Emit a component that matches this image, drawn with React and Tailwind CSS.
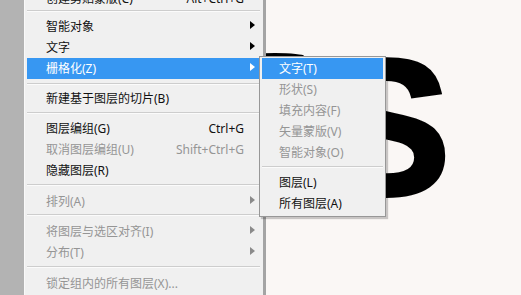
import React from 'react';

function Arrow({ color }) {
  return (
    <svg width="5" height="8" viewBox="0 0 5 8" className="-mt-[4px]">
      <path d="M0 0 L5 4 L0 8 Z" fill={color} />
    </svg>
  );
}

function Item({ label, shortcut, sub, disabled, active, h }) {
  const tone = active ? 'bg-[#3797f2] text-white' : disabled ? 'text-[#959595]' : 'text-[#111]';
  const arrow = active ? '#ffffff' : disabled ? '#8a8a8a' : '#000000';
  return (
    <div className={`flex items-center pl-[19px] ${h} ${tone}`}>
      <span className="flex-1 whitespace-nowrap">{label}</span>
      {shortcut && <span className="whitespace-nowrap">{shortcut}</span>}
      <span className="flex w-[16px] items-center pl-[6px]">{sub && <Arrow color={arrow} />}</span>
    </div>
  );
}

function SubItem({ label, disabled, active }) {
  const tone = active ? 'bg-[#3797f2] text-white' : disabled ? 'text-[#959595]' : 'text-[#111]';
  return (
    <div className={`flex h-[21px] items-center pl-[17px] whitespace-nowrap ${tone}`}>{label}</div>
  );
}

function Line() {
  return <div className="h-px bg-[#cdcdcd] shadow-[0_1px_0_#fbfbfb]" />;
}

export default function App() {
  return (
    <div className="relative flex h-[295px] w-[521px] overflow-hidden bg-[#faf7f5] font-['Noto_Sans','Noto_Sans_CJK_SC',sans-serif] text-[12px]">
      <div className="w-[24px] shrink-0 bg-[#b3b3b3]" />

      <div className="relative z-10 flex w-[242px] shrink-0 flex-col border-l border-r-[3px] border-l-[#f9f9f9] border-r-[#a4a4a4] bg-[#f0f0f0] pl-[2px] pr-[3px]">
        <div className="-mt-[12px]">
          <Item label="创建剪贴蒙版(C)" shortcut="Alt+Ctrl+G" h="h-[21px]" />
        </div>
        <div className="h-[8px] pt-[1px]"><Line /></div>
        <Item label="智能对象" sub h="h-[20px]" />
        <Item label="文字" sub h="h-[21px]" />
        <Item label="栅格化(Z)" sub active h="h-[21px]" />
        <div className="h-[9px] pt-[4px]"><Line /></div>
        <Item label="新建基于图层的切片(B)" h="h-[21px]" />
        <div className="h-[9px] pt-[3px]"><Line /></div>
        <Item label="图层编组(G)" shortcut="Ctrl+G" h="h-[21px]" />
        <Item label="取消图层编组(U)" shortcut="Shift+Ctrl+G" disabled h="h-[21px]" />
        <Item label="隐藏图层(R)" h="h-[21px]" />
        <div className="h-[10px] pt-[3px]"><Line /></div>
        <Item label="排列(A)" sub disabled h="h-[21px]" />
        <div className="h-[10px] pt-[2px]"><Line /></div>
        <Item label="将图层与选区对齐(I)" sub disabled h="h-[20px]" />
        <Item label="分布(T)" sub disabled h="h-[21px]" />
        <div className="h-[10px] pt-[3px]"><Line /></div>
        <Item label="锁定组内的所有图层(X)..." disabled h="h-[21px]" />
      </div>

      <div className="relative flex-1">
        <div className="absolute left-[-20px] top-[53px] h-[6px] w-[58px] rounded-[50%] border-t-[3px] border-black" />
        <div className="absolute left-[56px] top-[31px] font-['Liberation_Sans',sans-serif] text-[193px] font-bold leading-none text-black [-webkit-text-stroke:4px_black]">
          S
        </div>
      </div>

      <div className="absolute left-[259px] top-[56px] z-20 w-[127px] border border-[#979797] bg-[#f0f0f0] px-[2px] pt-[1px] pb-[2px] shadow-[2px_2px_1px_rgba(0,0,0,0.2)]">
        <SubItem label="文字(T)" active />
        <SubItem label="形状(S)" disabled />
        <SubItem label="填充内容(F)" disabled />
        <SubItem label="矢量蒙版(V)" disabled />
        <SubItem label="智能对象(O)" disabled />
        <div className="h-[9px] pt-[3px]"><Line /></div>
        <SubItem label="图层(L)" />
        <SubItem label="所有图层(A)" />
      </div>
    </div>
  );
}
